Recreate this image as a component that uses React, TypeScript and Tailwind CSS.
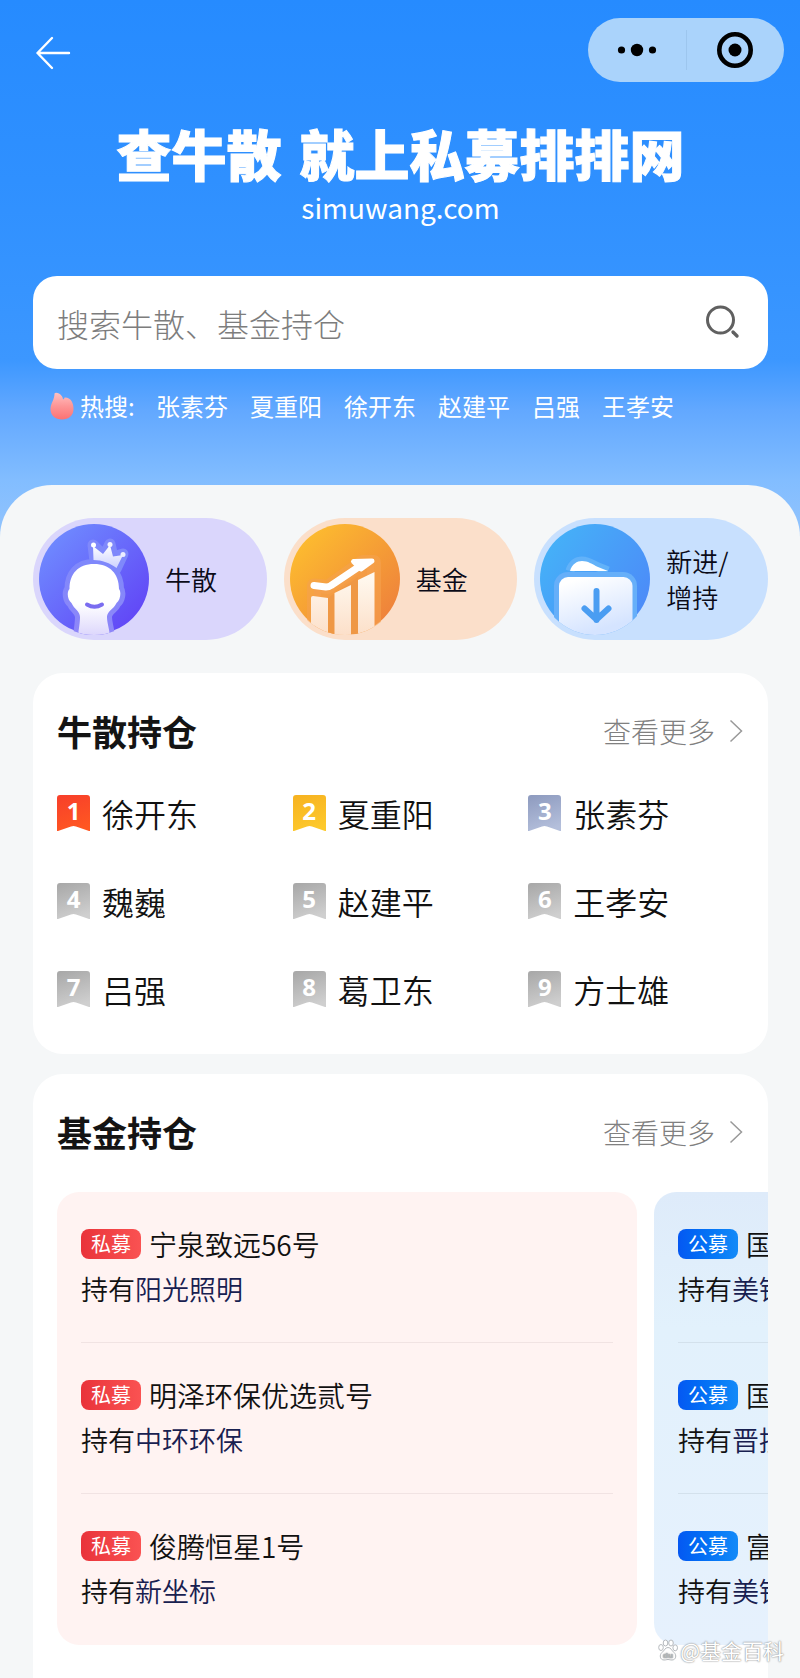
import type { ReactNode } from 'react';

const hotNames = ['张素芬', '夏重阳', '徐开东', '赵建平', '吕强', '王孝安'];

const investors = ['徐开东', '夏重阳', '张素芬', '魏巍', '赵建平', '王孝安', '吕强', '葛卫东', '方士雄'];

const badgeColors = [
  ['#f8402a', '#ff5722'],
  ['#f7b321', '#fdc92c'],
  ['#8f9cc0', '#b4bfdb'],
];

type Fund = { name: string; stock: string };

const privateFunds: Fund[] = [
  { name: '宁泉致远56号', stock: '阳光照明' },
  { name: '明泽环保优选贰号', stock: '中环环保' },
  { name: '俊腾恒星1号', stock: '新坐标' },
];

const publicFunds: Fund[] = [
  { name: '国', stock: '美锦' },
  { name: '国', stock: '晋控' },
  { name: '富', stock: '美锦' },
];

const headPath =
  'M55 40C39 40 30.500 50 30.500 65C27.500 68 28.500 76 32.500 79C35 85 41 87 41 93C41 99 40 103 39 112H71C70 103 68 99 68 93C68 87 75 85 77.500 79C81.500 76 82.500 68 80 65C80 50 71 40 55 40Z';

function BullIcon() {
  return (
    <svg viewBox="0 0 110 110" className="size-[110px] shrink-0 overflow-visible" aria-hidden="true">
      <defs>
        <linearGradient id="bull-bg" x1="0" y1="0" x2="1" y2="1">
          <stop offset="0.1" stopColor="#6f8bff" />
          <stop offset="0.9" stopColor="#6145f6" />
        </linearGradient>
        <linearGradient id="bull-face" x1="0" y1="0" x2="0" y2="1">
          <stop offset="0.55" stopColor="#ffffff" />
          <stop offset="1" stopColor="#dcd6fc" />
        </linearGradient>
        <linearGradient id="bull-halo" x1="0" y1="0" x2="0" y2="1">
          <stop offset="0" stopColor="#7f88fb" />
          <stop offset="1" stopColor="#8f86f8" />
        </linearGradient>
        <linearGradient id="bull-crown" x1="0" y1="0" x2="0" y2="1">
          <stop offset="0" stopColor="#ffffff" />
          <stop offset="1" stopColor="#cdd2ff" />
        </linearGradient>
        <clipPath id="bull-clip">
          <circle cx="55" cy="55" r="56" />
        </clipPath>
      </defs>
      <circle cx="55" cy="55" r="55" fill="url(#bull-bg)" />
      <g clipPath="url(#bull-clip)" strokeLinejoin="round">
        <path d={headPath} fill="url(#bull-halo)" stroke="url(#bull-halo)" strokeWidth="10" />
        <path
          d="M54 21L56 37C63 38 71 41 77 45L84 30L74 33L71 20L65 32Z"
          fill="#7f88fb"
          stroke="#7f88fb"
          strokeWidth="11"
        />
        <path d={headPath} fill="url(#bull-face)" />
        <path d="M54 22L54.500 36C63 36 71 39 77.500 44L84 31L74 32.500L71 21L64 30Z" fill="url(#bull-crown)" />
        <circle cx="54.500" cy="21" r="2.500" fill="#fff" />
        <circle cx="71" cy="20.500" r="2.500" fill="#f4f4ff" />
        <circle cx="84" cy="30.500" r="2.500" fill="#eceeff" />
        <path d="M48 80.500Q55.500 85 63 80.500" fill="none" stroke="#7a6cf0" strokeWidth="4" strokeLinecap="round" />
      </g>
    </svg>
  );
}

function FundIcon() {
  return (
    <svg viewBox="0 0 110 110" className="size-[110px] shrink-0 overflow-visible" aria-hidden="true">
      <defs>
        <linearGradient id="fund-bg" x1="0" y1="0" x2="1" y2="1">
          <stop offset="0.1" stopColor="#fdbd2f" />
          <stop offset="0.9" stopColor="#ee803c" />
        </linearGradient>
        <linearGradient id="fund-bar" gradientUnits="userSpaceOnUse" x1="0" y1="48" x2="0" y2="110">
          <stop offset="0.1" stopColor="#fff8ee" />
          <stop offset="1" stopColor="#fce0ca" />
        </linearGradient>
        <clipPath id="fund-clip">
          <circle cx="55" cy="55" r="56" />
        </clipPath>
      </defs>
      <circle cx="55" cy="55" r="55" fill="url(#fund-bg)" />
      <g clipPath="url(#fund-clip)">
        <path
          d="M24 61.500L38 63L73 38H84V110H24Z"
          fill="#f39c4c"
          fillOpacity="0.700"
          stroke="#f5a14f"
          strokeOpacity="0.600"
          strokeWidth="14"
          strokeLinejoin="round"
        />
        <path d="M38 74L68 53V110H38Z" fill="#ef9845" />
        <path d="M21 74Q21 72 23 72L38 74V112H21Z" fill="url(#fund-bar)" />
        <path d="M44.500 69L61 61V112H44.500Z" fill="url(#fund-bar)" />
        <path d="M68 56L84.500 48V112H68Z" fill="url(#fund-bar)" />
        <path
          d="M24 61.500L36 63Q39 63 41 61.500L73 40"
          fill="none"
          stroke="#fff"
          strokeWidth="7"
          strokeLinecap="round"
          strokeLinejoin="round"
        />
        <path d="M63.500 37.500L82 37L71 45Z" fill="#fff" stroke="#fff" strokeWidth="5" strokeLinejoin="round" />
      </g>
    </svg>
  );
}

function FolderIcon() {
  return (
    <svg viewBox="0 0 110 110" className="size-[110px] shrink-0 overflow-visible" aria-hidden="true">
      <defs>
        <linearGradient id="folder-bg" x1="0" y1="0.100" x2="1" y2="0.800">
          <stop offset="0.1" stopColor="#45b0f8" />
          <stop offset="0.9" stopColor="#4c8df8" />
        </linearGradient>
        <linearGradient id="folder-front" x1="0" y1="0" x2="0.300" y2="1">
          <stop offset="0.1" stopColor="#ffffff" />
          <stop offset="0.8" stopColor="#d5e4ff" />
        </linearGradient>
        <clipPath id="folder-clip">
          <circle cx="55" cy="55" r="56" />
        </clipPath>
      </defs>
      <circle cx="55" cy="55" r="55" fill="url(#folder-bg)" />
      <g clipPath="url(#folder-clip)">
        <path
          d="M30 47C32 40 37 37 42 37C48 37 52 40 58 43L68 47"
          fill="#62b2f9"
          stroke="#62b2f9"
          strokeWidth="9"
          strokeLinejoin="round"
        />
        <rect x="14" y="48" width="83" height="75" rx="14" fill="#66aff9" />
        <path d="M30 47C32 40 37 37 42 37C48 37 52 40 58 43L68 47Z" fill="#fff" />
        <rect x="19" y="53" width="73.500" height="75" rx="9" fill="url(#folder-front)" />
        <path
          d="M56.500 67V96M44.500 84.500L56.500 95.500L68.500 84.500"
          fill="none"
          stroke="#4a9df2"
          strokeWidth="6"
          strokeLinecap="round"
          strokeLinejoin="round"
        />
      </g>
    </svg>
  );
}

function CategoryPill({ tone, icon, children }: { tone: string; icon: ReactNode; children: ReactNode }) {
  return (
    <button
      type="button"
      className={`flex h-[122px] items-center gap-4 rounded-full pl-1.5 text-left text-[26px] leading-9 font-[350] text-[#0b0b18] ${tone}`}
    >
      {icon}
      <span>{children}</span>
    </button>
  );
}

function RankBadge({ rank }: { rank: number }) {
  const [from, to] = badgeColors[rank - 1] ?? ['#a9a9a9', '#cfcfcf'];
  return (
    <span className="grid h-9 w-[33px] shrink-0">
      <svg viewBox="0 0 33 36" className="col-start-1 row-start-1 h-9 w-[33px]" aria-hidden="true">
        <defs>
          <linearGradient id={`rank-${rank}`} x1="0.200" y1="0" x2="0.500" y2="1">
            <stop offset="0" stopColor={from} />
            <stop offset="1" stopColor={to} />
          </linearGradient>
        </defs>
        <path
          d="M0 3Q0 0 3 0H30Q33 0 33 3V35.500Q33 36.500 32 36L19 31.500Q16.500 30.500 14 31.500L1 36Q0 36.500 0 35.500Z"
          fill={`url(#rank-${rank})`}
        />
      </svg>
      <span className="col-start-1 row-start-1 text-center font-['Open_Sans','Noto_Sans',sans-serif] text-[24px] leading-8 font-bold text-white">
        {rank}
      </span>
    </span>
  );
}

function SectionHeader({ title }: { title: string }) {
  return (
    <div className="flex h-12 items-center justify-between pr-[25px] pl-6">
      <h2 className="text-[35px] leading-[48px] font-bold text-[#141414]">{title}</h2>
      <a href="#more" className="flex items-center gap-3.5 text-[28px] leading-[48px] font-light text-[#808080]">
        查看更多
        <svg viewBox="0 0 14 24" className="h-6 w-3.5" fill="none" stroke="#999" strokeWidth="1.500" aria-hidden="true">
          <path d="M1.500 1.500L12.500 12L1.500 22.500" />
        </svg>
      </a>
    </div>
  );
}

function FundPanel({ tag, tagTone, tone, line, funds }: { tag: string; tagTone: string; tone: string; line: string; funds: Fund[] }) {
  return (
    <ul className={`shrink-0 basis-[580px] rounded-[22px] px-6 ${tone}`}>
      {funds.map((fund, i) => (
        <li key={i} className={`h-[151px] border-b pt-9 last:border-transparent ${line}`}>
          <div className="flex h-8 items-center gap-2">
            <span
              className={`flex h-[30px] w-[60px] shrink-0 items-center justify-center rounded-lg text-[20px] leading-[30px] text-white ${tagTone}`}
            >
              {tag}
            </span>
            <h3 className="text-[28px] leading-8 font-[350] whitespace-nowrap text-[#111]">{fund.name}</h3>
          </div>
          <p className="mt-[9px] text-[27px] leading-10 font-[350] whitespace-nowrap text-[#111]">
            持有<span className="text-[#182050]">{fund.stock}</span>
          </p>
        </li>
      ))}
    </ul>
  );
}

export default function App() {
  return (
    <div className="relative flex min-h-screen flex-col overflow-hidden bg-[#f5f7f8] bg-[linear-gradient(180deg,#268bff_0px,#2f90ff_180px,#3694ff_290px,#3c97ff_360px,#62a8ff_410px,#82bdff_480px,#93c4fd_540px)] bg-[length:100%_540px] bg-no-repeat font-['Noto_Sans_CJK_SC','Noto_Sans',sans-serif]">
      <header className="pr-8 pl-[33px]">
        <div className="-mr-4 flex items-center justify-between pt-[18px]">
          <button type="button" aria-label="返回" className="flex size-10 items-center justify-center pt-1.5">
            <svg viewBox="0 0 36 34" className="h-[34px] w-9 shrink-0" fill="none" stroke="#fff" strokeWidth="2.400" strokeLinecap="round" strokeLinejoin="round" aria-hidden="true">
              <path d="M17 2L2.500 17L17 32M2.500 17H34" />
            </svg>
          </button>
          <div className="flex h-16 w-[196px] items-center rounded-full bg-[#aad3fb]">
            <button type="button" aria-label="更多" className="flex h-full flex-1 items-center justify-center">
              <svg viewBox="0 0 40 14" className="h-3.5 w-10" aria-hidden="true">
                <circle cx="4.500" cy="7" r="3.600" />
                <circle cx="20" cy="7" r="6.200" />
                <circle cx="35.500" cy="7" r="3.600" />
              </svg>
            </button>
            <span className="h-10 w-px bg-[#9dc6ee]" />
            <button type="button" aria-label="关闭" className="flex h-full flex-1 items-center justify-center">
              <svg viewBox="0 0 36 36" className="size-9" aria-hidden="true">
                <circle cx="18" cy="18" r="15.700" fill="none" stroke="#000" strokeWidth="4.600" />
                <circle cx="18" cy="18" r="6.500" />
              </svg>
            </button>
          </div>
        </div>

        <h1 className="mt-10 flex justify-center gap-[18px] text-[55px] leading-[60px] font-black whitespace-nowrap text-white [-webkit-text-stroke:1px_white]">
          <span>查牛散</span>
          <span>就上私募排排网</span>
        </h1>
        <p className="mt-[3px] text-center text-[28px] leading-[44px] text-white">simuwang.com</p>

        <form className="mt-[47px] flex h-[93px] items-center rounded-3xl bg-white pr-7 pl-6" onSubmit={(e) => e.preventDefault()}>
          <input
            type="search"
            aria-label="搜索"
            placeholder="搜索牛散、基金持仓"
            className="h-12 min-w-0 flex-1 bg-transparent text-[32px] font-light text-[#333] outline-none placeholder:text-[#7d7d7d]"
          />
          <button type="submit" aria-label="搜索" className="flex size-9 items-center justify-center">
            <svg viewBox="0 0 36 36" className="size-9" fill="none" stroke="#606060" strokeWidth="3" strokeLinecap="round" aria-hidden="true">
              <circle cx="16.500" cy="15" r="13" />
              <path d="M29 27L33 31" strokeWidth="3.400" />
            </svg>
          </button>
        </form>

        <div className="mt-[19px] flex h-9 items-center pl-[17px] text-[24px] leading-9 whitespace-nowrap text-white">
          <svg viewBox="0 0 24 28" className="mr-1.5 h-7 w-6" aria-hidden="true">
            <defs>
              <linearGradient id="flame" x1="0" y1="0" x2="0" y2="1">
                <stop offset="0" stopColor="#ffc1c1" />
                <stop offset="0.5" stopColor="#fd9596" />
                <stop offset="1" stopColor="#fb7273" />
              </linearGradient>
            </defs>
            <path
              d="M4.500 1.500C5 0.500 7 0.500 9 1.500C11.500 3 13 5 13 7.500C14 7 14.500 6 14.500 5.500C17 5 20 6.500 21.500 9C23 11.500 23.500 14 23.500 17C23.500 23.500 18.500 27.500 12 27.500C5.500 27.500 0.500 23.500 0.500 17C0.500 11 4.500 8 4.500 1.500Z"
              fill="url(#flame)"
            />
          </svg>
          <span className="w-[76px]">热搜:</span>
          <nav className="flex gap-[22px]">
            {hotNames.map((name) => (
              <a key={name} href="#search">
                {name}
              </a>
            ))}
          </nav>
        </div>
      </header>

      <main className="mt-[61px] flex flex-1 flex-col rounded-t-[52px] bg-[#f5f7f8] pt-[33px] pr-8 pl-[33px]">
        <nav className="grid grid-cols-3 gap-[17px]">
          <CategoryPill tone="bg-[#dad6fc]" icon={<BullIcon />}>
            牛散
          </CategoryPill>
          <CategoryPill tone="bg-[#fbdfca]" icon={<FundIcon />}>
            基金
          </CategoryPill>
          <CategoryPill tone="bg-[#c8e0fe]" icon={<FolderIcon />}>
            新进/
            <br />
            增持
          </CategoryPill>
        </nav>

        <section className="mt-[33px] rounded-[30px] bg-white pt-[34px] pb-[41px]">
          <SectionHeader title="牛散持仓" />
          <ol className="mt-[34px] grid grid-cols-3 gap-y-[40px] pr-1 pl-6">
            {investors.map((name, i) => (
              <li key={name} className="flex h-12 items-center gap-3">
                <RankBadge rank={i + 1} />
                <a href="#investor" className="text-[32px] leading-[48px] font-[350] whitespace-nowrap text-[#111]">
                  {name}
                </a>
              </li>
            ))}
          </ol>
        </section>

        <section className="mt-5 flex-1 rounded-t-[30px] bg-white pt-[34px] pb-8">
          <SectionHeader title="基金持仓" />
          <div className="mt-9 flex gap-[17px] overflow-x-auto pl-6 [scrollbar-width:none]">
            <FundPanel
              tag="私募"
              tagTone="bg-gradient-to-r from-[#e9323a] to-[#fa5252]"
              tone="bg-[#fff3f2]"
              line="border-[#f1e3e3]"
              funds={privateFunds}
            />
            <FundPanel
              tag="公募"
              tagTone="bg-gradient-to-r from-[#0558f2] to-[#148af8]"
              tone="bg-[linear-gradient(180deg,#deebfa,#e2f1fc_30%,#e6f1fd)]"
              line="border-[#d3e1ec]"
              funds={publicFunds}
            />
          </div>
        </section>
      </main>

      <div className="absolute right-4 bottom-3 flex items-center gap-0.5 text-[21px] leading-8 text-white [text-shadow:0_0_2px_#888,0_0_1px_#999]">
        <svg viewBox="0 0 20 22" className="h-[22px] w-5" fill="#fff" stroke="#b5b9bd" strokeWidth="1" aria-hidden="true">
          <ellipse cx="3" cy="8.500" rx="2.300" ry="3" />
          <ellipse cx="7.500" cy="4" rx="2.300" ry="3" />
          <ellipse cx="13" cy="4" rx="2.300" ry="3" />
          <ellipse cx="17.200" cy="8.800" rx="2.300" ry="3" />
          <path d="M10 8.500C13 8.500 13.500 11.500 16 13.500C19 16 18 21 14 21C12 21 11.500 20.500 10 20.500C8.500 20.500 8 21 6 21C2 21 1 16 4 13.500C6.500 11.500 7 8.500 10 8.500Z" />
          <text x="10" y="18.500" textAnchor="middle" fontSize="8" fontWeight="700" fill="#b5b9bd" stroke="none" fontFamily="Liberation Sans, sans-serif">
            du
          </text>
        </svg>
        <span>@基金百科</span>
      </div>
    </div>
  );
}
